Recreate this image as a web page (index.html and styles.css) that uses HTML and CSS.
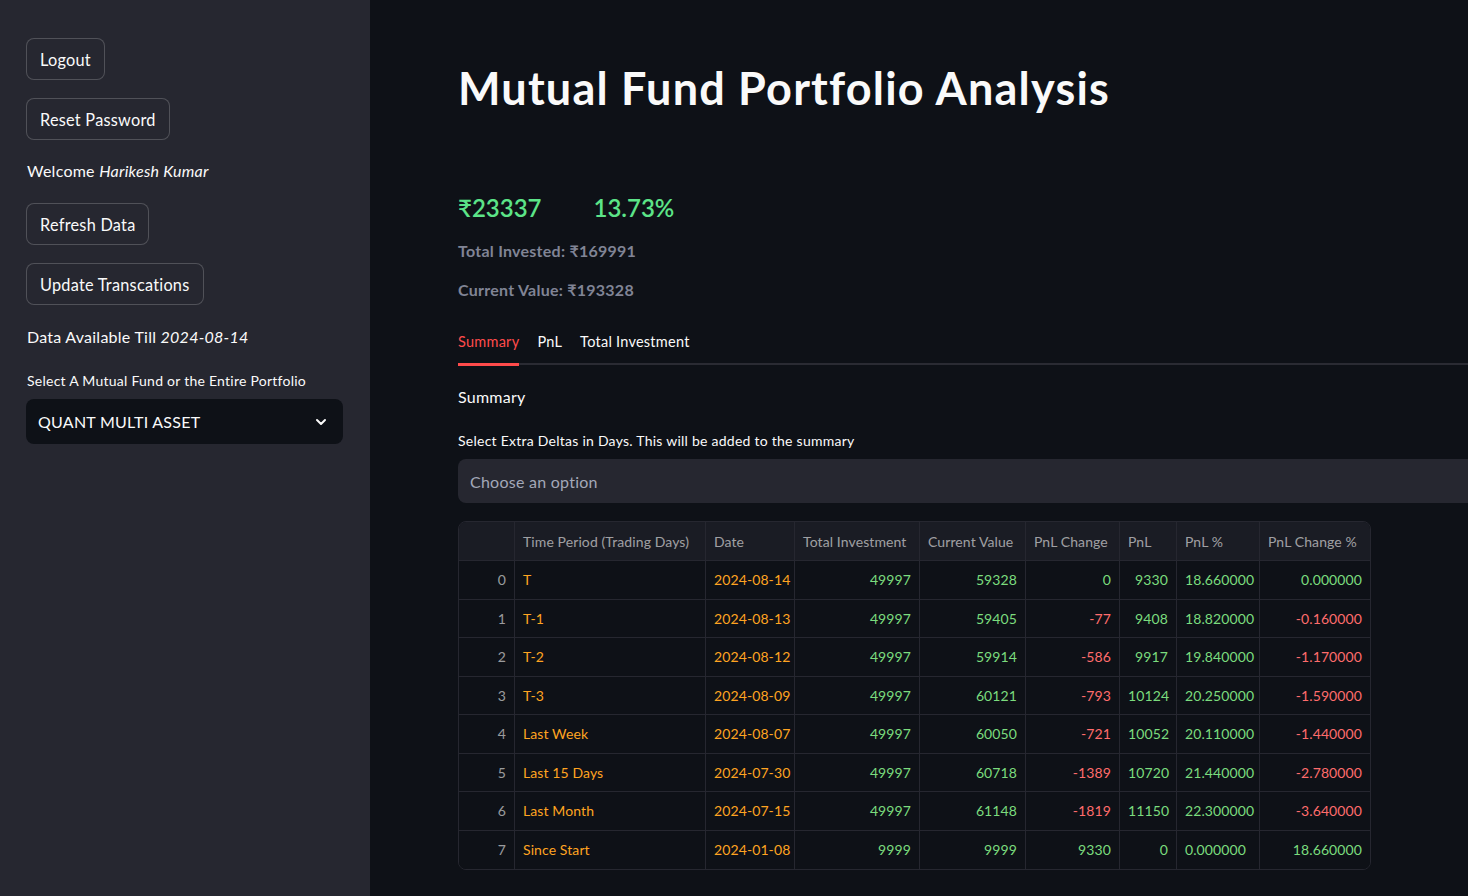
FILE: index.html
```html
<!DOCTYPE html>
<html>
<head>
<meta charset="utf-8">
<link rel="stylesheet" href="styles.css">
</head>
<body>
<div class="app">
  <aside class="sidebar">
    <button class="btn">Logout</button>
    <button class="btn">Reset Password</button>
    <p class="text welcome">Welcome <em>Harikesh Kumar</em></p>
    <button class="btn">Refresh Data</button>
    <button class="btn">Update Transcations</button>
    <p class="text avail">Data Available Till <em>2024-08-14</em></p>
    <label class="label">Select A Mutual Fund or the Entire Portfolio</label>
    <div class="select">
      <span>QUANT MULTI ASSET</span>
      <svg width="16" height="16" viewBox="0 0 16 16"><path d="M4 6 L8 10 L12 6" fill="none" stroke="#fafafa" stroke-width="2" stroke-linecap="round" stroke-linejoin="round"/></svg>
    </div>
  </aside>
  <main class="main">
    <h1 class="title">Mutual Fund Portfolio Analysis</h1>
    <div class="metrics">
      <span class="big-green">₹23337</span>
      <span class="big-green">13.73%</span>
    </div>
    <p class="muted">Total Invested: ₹169991</p>
    <p class="muted">Current Value: ₹193328</p>
    <div class="tabs">
      <span class="tab active">Summary</span>
      <span class="tab">PnL</span>
      <span class="tab">Total Investment</span>
    </div>
    <p class="sub">Summary</p>
    <label class="label main-label">Select Extra Deltas in Days. This will be added to the summary</label>
    <div class="multiselect">Choose an option</div>
    <table class="grid">
      <colgroup>
        <col class="w0"><col class="w1"><col class="w2"><col class="w3"><col class="w4"><col class="w5"><col class="w6"><col class="w7"><col class="w8">
      </colgroup>
      <thead>
        <tr>
          <th class="idx"></th>
          <th>Time Period (Trading Days)</th>
          <th>Date</th>
          <th>Total Investment</th>
          <th>Current Value</th>
          <th>PnL Change</th>
          <th>PnL</th>
          <th>PnL %</th>
          <th>PnL Change %</th>
        </tr>
      </thead>
      <tbody>
        <tr><td class="idx">0</td><td class="or">T</td><td class="or">2024-08-14</td><td class="gr num">49997</td><td class="gr num">59328</td><td class="gr num">0</td><td class="gr num">9330</td><td class="gr">18.660000</td><td class="gr num">0.000000</td></tr>
        <tr><td class="idx">1</td><td class="or">T-1</td><td class="or">2024-08-13</td><td class="gr num">49997</td><td class="gr num">59405</td><td class="rd num">-77</td><td class="gr num">9408</td><td class="gr">18.820000</td><td class="rd num">-0.160000</td></tr>
        <tr><td class="idx">2</td><td class="or">T-2</td><td class="or">2024-08-12</td><td class="gr num">49997</td><td class="gr num">59914</td><td class="rd num">-586</td><td class="gr num">9917</td><td class="gr">19.840000</td><td class="rd num">-1.170000</td></tr>
        <tr><td class="idx">3</td><td class="or">T-3</td><td class="or">2024-08-09</td><td class="gr num">49997</td><td class="gr num">60121</td><td class="rd num">-793</td><td class="gr num">10124</td><td class="gr">20.250000</td><td class="rd num">-1.590000</td></tr>
        <tr><td class="idx">4</td><td class="or">Last Week</td><td class="or">2024-08-07</td><td class="gr num">49997</td><td class="gr num">60050</td><td class="rd num">-721</td><td class="gr num">10052</td><td class="gr">20.110000</td><td class="rd num">-1.440000</td></tr>
        <tr><td class="idx">5</td><td class="or">Last 15 Days</td><td class="or">2024-07-30</td><td class="gr num">49997</td><td class="gr num">60718</td><td class="rd num">-1389</td><td class="gr num">10720</td><td class="gr">21.440000</td><td class="rd num">-2.780000</td></tr>
        <tr><td class="idx">6</td><td class="or">Last Month</td><td class="or">2024-07-15</td><td class="gr num">49997</td><td class="gr num">61148</td><td class="rd num">-1819</td><td class="gr num">11150</td><td class="gr">22.300000</td><td class="rd num">-3.640000</td></tr>
        <tr><td class="idx">7</td><td class="or">Since Start</td><td class="or">2024-01-08</td><td class="gr num">9999</td><td class="gr num">9999</td><td class="gr num">9330</td><td class="gr num">0</td><td class="gr">0.000000</td><td class="gr num">18.660000</td></tr>
      </tbody>
    </table>
  </main>
</div>
</body>
</html>
```

FILE: styles.css
```css
* { box-sizing: border-box; }
html, body {
  margin: 0;
  padding: 0;
  height: 100%;
  background: #0e1117;
  color: #fafafa;
  font-family: "Lato", "Noto Sans", sans-serif;
  letter-spacing: 0.25px;
  overflow: hidden;
}
.app {
  display: flex;
  width: 1468px;
  height: 896px;
}
.sidebar {
  width: 370px;
  flex: none;
  background: #262730;
  padding: 38px 26px 0 26px;
  display: flex;
  flex-direction: column;
  align-items: flex-start;
}
.btn {
  font-family: inherit;
  font-size: 16.3px;
  letter-spacing: 0.25px;
  color: #fafafa;
  background: #262730;
  border: 1px solid rgba(250,250,250,0.2);
  border-radius: 8px;
  height: 42px;
  padding: 0 13px;
  margin: 0 0 18px 0;
}
.text {
  font-size: 16px;
  line-height: 24px;
}
.welcome { margin: 1px 0 20px 1px; }
.avail { margin: 2px 0 22px 1px; }
.label {
  font-size: 14px;
  line-height: 20px;
  margin: 0 0 8px 1px;
}
.select {
  width: 317px;
  height: 45px;
  background: #0e1117;
  border-radius: 8px;
  display: flex;
  align-items: center;
  justify-content: space-between;
  padding: 0 14px 0 12px;
  font-size: 16px;
}
.main {
  flex: 1;
  padding: 56px 0 0 88px;
  min-width: 0;
}
.title {
  margin: 0;
  font-size: 45px;
  font-weight: 700;
  line-height: 64px;
  letter-spacing: 1.2px;
}
.metrics {
  margin-top: 72px;
  display: flex;
  gap: 52px;
}
.big-green {
  color: #5ce488;
  font-size: 24px;
  font-weight: 600;
  line-height: 32px;
  letter-spacing: 0;
}
.muted {
  margin: 15px 0 0 0;
  color: #808495;
  font-size: 16px;
  font-weight: 700;
  line-height: 23px;
}
.muted + .muted { margin-top: 16px; }
.tabs {
  margin-top: 27px;
  display: flex;
  gap: 18px;
  border-bottom: 2px solid #2a2b33;
  height: 37px;
  align-items: flex-start;
}
.tab {
  font-size: 14.5px;
  line-height: 28px;
  height: 37px;
}
.tab.active {
  color: #ff4b4b;
  border-bottom: 3px solid #ff4b4b;
  height: 38px;
}
.sub {
  margin: 20px 0 0 0;
  font-size: 16px;
  line-height: 24px;
}
.main-label {
  display: block;
  margin: 22px 0 0 0;
  line-height: 20px;
}
.multiselect {
  margin-top: 8px;
  height: 44px;
  background: #262730;
  border-radius: 8px 0 0 8px;
  display: flex;
  align-items: center;
  padding-left: 12px;
  color: #a3a8b8;
  font-size: 16px;
}
.grid {
  margin-top: 18px;
  border-collapse: separate;
  border-spacing: 0;
  border: 1px solid #262730;
  border-radius: 8px;
  font-size: 14px;
  overflow: hidden;
  table-layout: fixed;
  width: 911px;
  letter-spacing: 0.1px;
}
.w0 { width: 56px; }
.w1 { width: 191px; }
.w2 { width: 89px; }
.w3 { width: 125px; }
.w4 { width: 106px; }
.w5 { width: 94px; }
.w6 { width: 57px; }
.w7 { width: 83px; }
.w8 { width: 110px; }
.grid th, .grid td {
  height: 38.5px;
  padding: 0 8px;
  border-right: 1px solid #262730;
  border-bottom: 1px solid #262730;
  white-space: nowrap;
  overflow: hidden;
}
.grid tr > :last-child { border-right: none; }
.grid tbody tr:last-child td { border-bottom: none; }
.grid th {
  background: #1a1c24;
  color: rgba(250,250,250,0.6);
  font-weight: 400;
  text-align: left;
  height: 39px;
}
.grid td { background: #0e1117; }
.grid .idx { text-align: right; color: rgba(250,250,250,0.6); }
.num { text-align: right; }
.or { color: #ffa421; }
.gr { color: #7bdc7e; }
.rd { color: #ff6c6c; }
```
